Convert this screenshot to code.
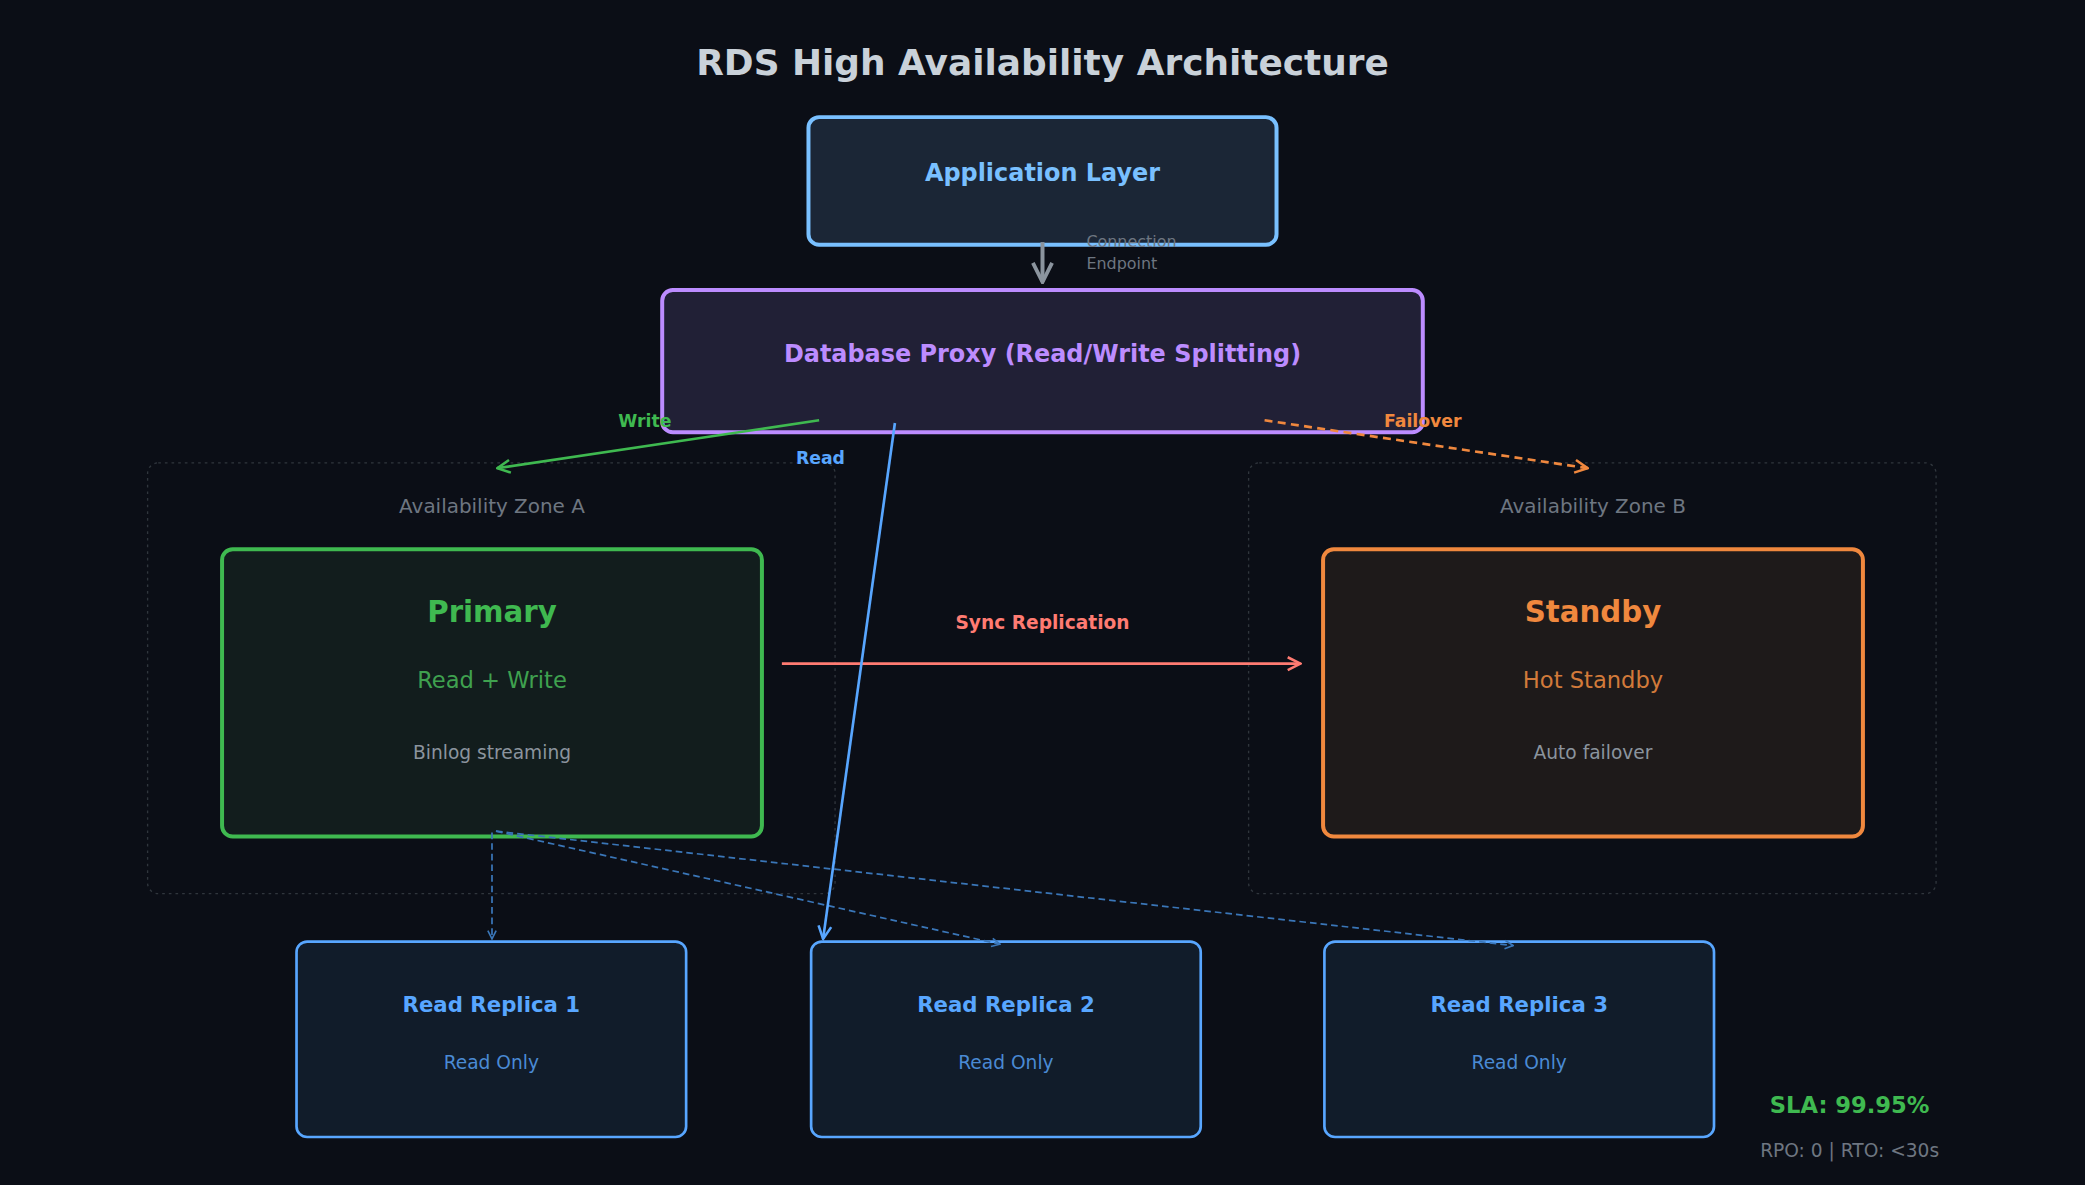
const F = "'DejaVu Sans', 'Liberation Sans', sans-serif";

function Arrow({ id, color }: { id: string; color: string }) {
  return (
    <marker id={id} viewBox="0 0 10 10" refX="9" refY="5" markerWidth="6" markerHeight="6" orient="auto">
      <path d="M1 1 L9 5 L1 9" fill="none" stroke={color} strokeWidth="1.6" />
    </marker>
  );
}

const replicas = [
  { x: 223, n: 1 },
  { x: 610, n: 2 },
  { x: 996, n: 3 },
];

export default function App() {
  return (
    <div className="w-[2085px] h-[1185px] bg-[#0b0e16] overflow-hidden">
      <svg width="2085" height="1185" viewBox="0 0 1568 891" fontFamily={F}>
        <defs>
          <Arrow id="g" color="#3fb950" />
          <Arrow id="b" color="#58a6ff" />
          <Arrow id="o" color="#f0883e" />
          <Arrow id="r" color="#ff7b72" />
          <Arrow id="gr" color="#8b949e" />
          <Arrow id="d" color="#3a76b8" />
        </defs>

        <text x="784" y="56" textAnchor="middle" fontSize="27" fontWeight="bold" fill="#c9d1d9">
          RDS High Availability Architecture
        </text>

        {/* zones */}
        <rect x="111" y="348" width="517" height="324" rx="8" fill="none" stroke="#30363d" strokeDasharray="2 3" />
        <rect x="939" y="348" width="517" height="324" rx="8" fill="none" stroke="#30363d" strokeDasharray="2 3" />
        <text x="370" y="386" textAnchor="middle" fontSize="15" fill="#6e7681">Availability Zone A</text>
        <text x="1198" y="386" textAnchor="middle" fontSize="15" fill="#6e7681">Availability Zone B</text>

        {/* application */}
        <rect x="608" y="88" width="352" height="96" rx="8" fill="#1b2636" stroke="#79c0ff" strokeWidth="3" />
        <text x="784" y="136" textAnchor="middle" fontSize="18" fontWeight="bold" fill="#79c0ff">Application Layer</text>
        <line x1="784" y1="182" x2="784" y2="212" stroke="#8b949e" strokeWidth="3" markerEnd="url(#gr)" />
        <text x="817" y="186" fontSize="12" fill="#6e7681">Connection</text>
        <text x="817" y="202" fontSize="12" fill="#6e7681">Endpoint</text>

        {/* proxy */}
        <rect x="498" y="218" width="572" height="107" rx="8" fill="#212036" stroke="#bc8cff" strokeWidth="3" />
        <text x="784" y="272" textAnchor="middle" fontSize="18" fontWeight="bold" fill="#bc8cff">
          Database Proxy (Read/Write Splitting)
        </text>

        {/* primary */}
        <rect x="167" y="413" width="406" height="216" rx="8" fill="#121d1d" stroke="#3fb950" strokeWidth="3" />
        <text x="370" y="468" textAnchor="middle" fontSize="22" fontWeight="bold" fill="#3fb950">Primary</text>
        <text x="370" y="517" textAnchor="middle" fontSize="17" fill="#3fa14f">Read + Write</text>
        <text x="370" y="571" textAnchor="middle" fontSize="14" fill="#8b949e">Binlog streaming</text>

        {/* standby */}
        <rect x="995" y="413" width="406" height="216" rx="8" fill="#1e1a1a" stroke="#f0883e" strokeWidth="3" />
        <text x="1198" y="468" textAnchor="middle" fontSize="22" fontWeight="bold" fill="#f0883e">Standby</text>
        <text x="1198" y="517" textAnchor="middle" fontSize="17" fill="#d27a3a">Hot Standby</text>
        <text x="1198" y="571" textAnchor="middle" fontSize="14" fill="#8b949e">Auto failover</text>

        {/* sync */}
        <line x1="588" y1="499" x2="978" y2="499" stroke="#ff7b72" strokeWidth="2" markerEnd="url(#r)" />
        <text x="784" y="473" textAnchor="middle" fontSize="14" fontWeight="bold" fill="#ff7b72">Sync Replication</text>

        {/* replicas */}
        {replicas.map((r) => (
          <g key={r.n}>
            <rect x={r.x} y="708" width="293" height="147" rx="8" fill="#111c2a" stroke="#58a6ff" strokeWidth="2" />
            <text x={r.x + 146.5} y="761" textAnchor="middle" fontSize="16" fontWeight="bold" fill="#58a6ff">
              Read Replica {r.n}
            </text>
            <text x={r.x + 146.5} y="804" textAnchor="middle" fontSize="14" fill="#4a8ad4">Read Only</text>
          </g>
        ))}
        <g stroke="#3a76b8" strokeWidth="1.3" strokeDasharray="5 3" fill="none">
          <line x1="370" y1="626" x2="370" y2="706" markerEnd="url(#d)" />
          <line x1="373" y1="625" x2="752" y2="710" markerEnd="url(#d)" />
          <line x1="373" y1="625" x2="1138" y2="711" markerEnd="url(#d)" />
        </g>

        {/* proxy routes */}
        <line x1="616" y1="316" x2="374" y2="352" stroke="#3fb950" strokeWidth="2" markerEnd="url(#g)" />
        <text x="485" y="321" textAnchor="middle" fontSize="13" fontWeight="bold" fill="#3fb950">Write</text>
        <line x1="673" y1="318" x2="619" y2="706" stroke="#58a6ff" strokeWidth="2" markerEnd="url(#b)" />
        <text x="617" y="349" textAnchor="middle" fontSize="13" fontWeight="bold" fill="#58a6ff">Read</text>
        <line x1="951" y1="316" x2="1194" y2="352" stroke="#f0883e" strokeWidth="2" strokeDasharray="6 4" markerEnd="url(#o)" />
        <text x="1070" y="321" textAnchor="middle" fontSize="13" fontWeight="bold" fill="#f0883e">Failover</text>

        <text x="1391" y="837" textAnchor="middle" fontSize="17" fontWeight="bold" fill="#3fb950">SLA: 99.95%</text>
        <text x="1391" y="870" textAnchor="middle" fontSize="14" fill="#6e7681">RPO: 0 | RTO: &lt;30s</text>
      </svg>
    </div>
  );
}
